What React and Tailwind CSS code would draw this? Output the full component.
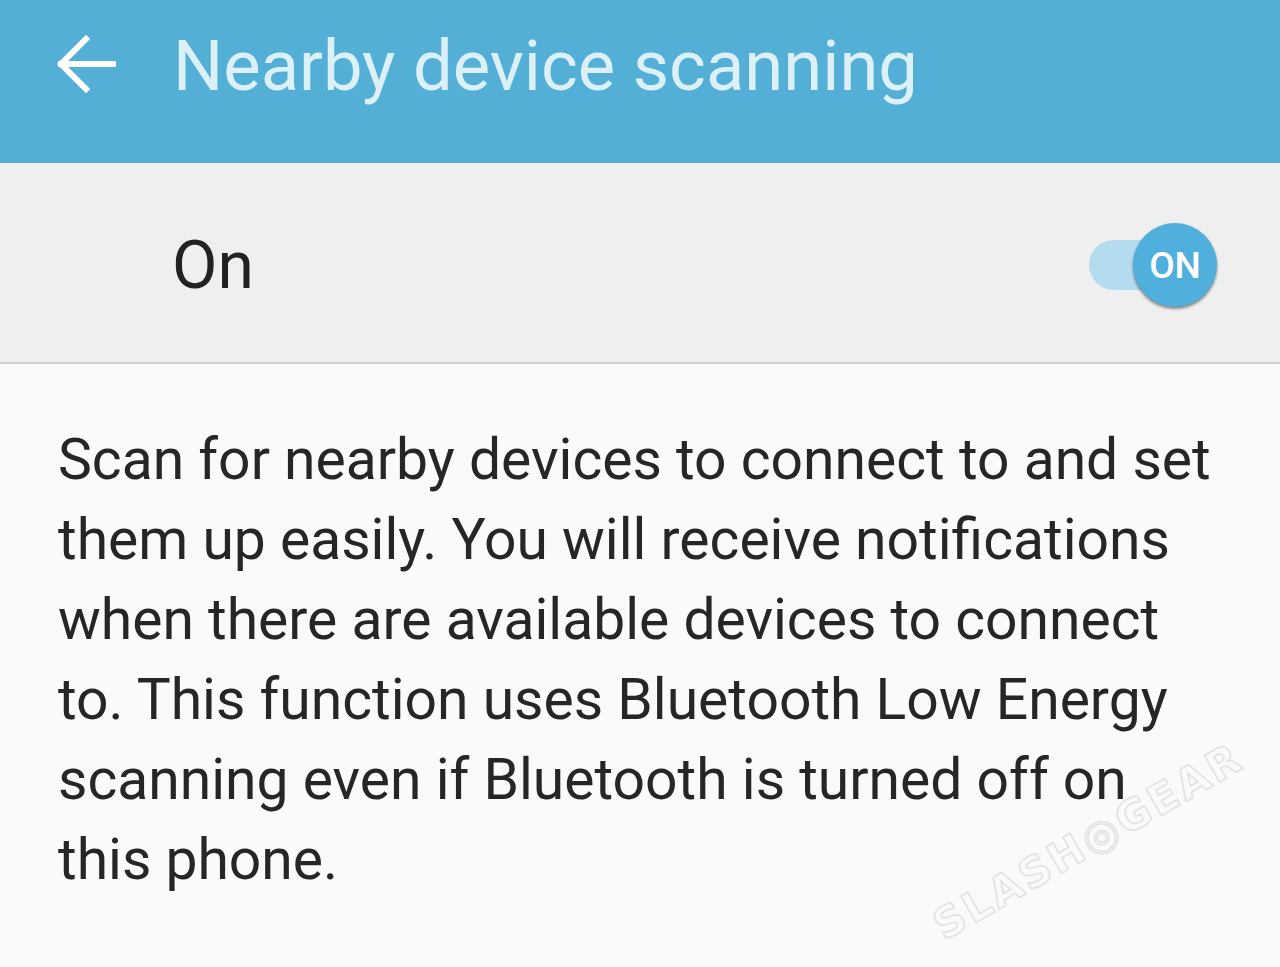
export default function App() {
  return (
    <div className="relative w-[1280px] h-[967px] overflow-hidden bg-[#fafafa] font-['Roboto',sans-serif]">
      {/* Header */}
      <div className="h-[163px] bg-[#53afd6] flex items-start pt-[34px]">
        <div className="w-[173px] pl-[55px]">
          <svg width="62" height="60" viewBox="0 0 62 60" fill="none" stroke="#ffffff" strokeWidth="6" strokeLinecap="square">
            <path d="M6 30 H58" />
            <path d="M31 5 L6 30 L31 55" />
          </svg>
        </div>
        <h1 className="text-[70.5px] text-[#dcf0f8] leading-none -mt-[3px]">Nearby device scanning</h1>
      </div>

      {/* Toggle row */}
      <div className="h-[201px] bg-[#efefef] flex items-center justify-between pl-[172px] pr-[63px] border-b-2 border-[#cfcfcf]">
        <span className="text-[66px] text-[#222222] leading-none mt-[6px]">On</span>
        <div className="flex items-center mt-[5px]">
          <div className="w-[92px] h-[50px] rounded-full bg-[#b4dcee] -mr-[48px]" />
          <div className="relative w-[84px] h-[84px] rounded-full bg-[#50afdc] flex items-center justify-center shadow-[0_2px_3px_rgba(0,0,0,0.45)]">
            <span className="text-[37px] text-white leading-none font-medium">ON</span>
          </div>
        </div>
      </div>

      {/* Description */}
      <p className="w-[1226px] pl-[58px] pt-[56px] text-[57px] leading-[80px] text-[#262626]">
        Scan for nearby devices to connect to and set them up easily. You will receive notifications when there are available devices to connect to. This function uses Bluetooth Low Energy scanning even if Bluetooth is turned off on this phone.
      </p>

      {/* Watermark */}
      <div className="absolute left-[937px] top-[908px] -rotate-[30deg] origin-left text-[42px] leading-none tracking-[3px] text-transparent [-webkit-text-stroke:1.5px_#e2e2e2] font-['DejaVu_Sans',sans-serif] font-bold whitespace-nowrap">
        SLASH◎GEAR
      </div>
    </div>
  );
}
